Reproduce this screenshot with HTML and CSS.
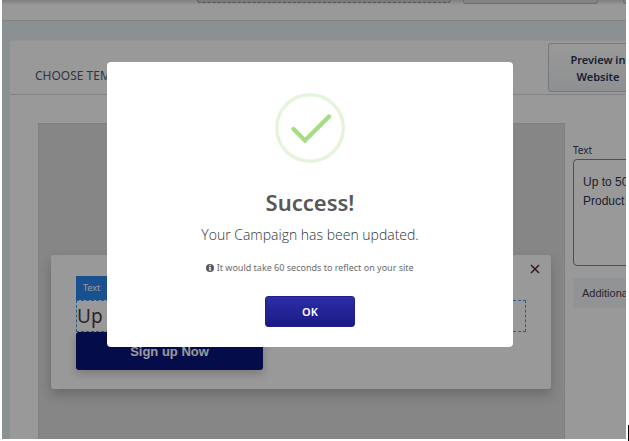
FILE: index.html
```html
<!DOCTYPE html>
<html lang="en">
<head>
    <meta charset="UTF-8">
    <meta name="viewport" content="width=device-width, initial-scale=1.0">
    <title>Choose Template</title>
    <link rel="stylesheet" href="styles.css">
</head>
<body>

    <div class="app">
        <header class="topbar">
            <div class="topbar-search"></div>
            <div class="topbar-select"></div>
            <div class="topbar-more"></div>
        </header>

        <main class="panel">
            <div class="panel-header">
                <h1>CHOOSE TEMPLATE</h1>
                <button type="button" class="preview-btn">Preview in<br>Website</button>
            </div>

            <div class="editor">
                <section class="canvas">
                    <div class="campaign">
                        <button type="button" class="campaign-close" aria-label="Close">
                            <svg width="10" height="10" viewBox="0 0 10 10"><path d="M1 1l8 8M9 1L1 9" fill="none" stroke="currentColor" stroke-width="1.5"/></svg>
                        </button>
                        <span class="block-tag">Text</span>
                        <p class="block-text">Up to 50</p>
                        <button type="button" class="signup-btn">Sign up Now</button>
                    </div>
                </section>

                <aside class="settings">
                    <label for="block-text">Text</label>
                    <textarea id="block-text">Up to 50
Product</textarea>
                    <button type="button" class="additional">Additiona</button>
                </aside>
            </div>
        </main>

        <!-- Success dialog -->
        <div class="overlay">
            <div class="modal" role="dialog" aria-labelledby="modal-title">
                <svg class="modal-icon" viewBox="0 0 70 70">
                    <circle cx="35" cy="35" r="33.3" fill="none" stroke="#e4f5da" stroke-width="3.4"/>
                    <path d="M18.5 36L30 47.5L54 23.5" fill="none" stroke="#a5dc86" stroke-width="4.4" stroke-linecap="round"/>
                </svg>
                <h2 id="modal-title">Success!</h2>
                <p class="modal-text">Your Campaign has been updated.</p>
                <p class="modal-hint">
                    <svg width="8" height="8" viewBox="0 0 8 8"><circle cx="4" cy="4" r="4" fill="#54595f"/><path d="M3.4 1h1.3v1.2H3.4zM2.9 3h1.8v2.7h.6v.9H2.8v-.9h.6V3.9h-.5z" fill="#fff"/></svg>
                    It would take 60 seconds to reflect on your site
                </p>
                <button type="button" class="ok-btn">OK</button>
            </div>
        </div>
    </div>
    <span class="caret"></span>

</body>
</html>
```
FILE: styles.css
```css
* {
    box-sizing: border-box;
}

body {
    font-family: 'Noto Sans', 'Segoe UI', sans-serif;
    margin: 0;
    padding: 0 3px 2px 2px;
    height: 100vh;
    overflow: hidden;
    background-color: #fff;
    color: #3c4257;
}

button {
    font-family: inherit;
    cursor: pointer;
}

.app {
    position: relative;
    display: flex;
    flex-direction: column;
    height: 100%;
    overflow: hidden;
    background-color: #e8f0f5;
}

/* Top bar */
.topbar {
    display: flex;
    flex-shrink: 0;
    align-items: flex-start;
    justify-content: flex-end;
    height: 21px;
    background: linear-gradient(#d4d4d4, #fff 5px);
    border-bottom: 1px solid #d5d9dc;
}

.topbar-search {
    width: 254px;
    height: 3px;
    margin-right: 12px;
    border: 1px dashed #8a8f94;
    border-top: none;
    border-radius: 0 0 3px 3px;
    background-color: #ccc;
}

.topbar-select {
    width: 135px;
    height: 4px;
    margin-right: 25px;
    border: 1px solid #b5bac2;
    border-top: none;
    border-radius: 0 0 3px 3px;
    background-color: #d8dadd;
}

.topbar-more {
    width: 3px;
    height: 4px;
    border-left: 1px solid #b5bac2;
    border-bottom: 1px solid #b5bac2;
    border-radius: 0 0 0 3px;
}

/* Main panel */
.panel {
    display: flex;
    flex: 1;
    flex-direction: column;
    margin: 19px 0 0 8px;
    border-top: 1px solid #f2f5f7;
    border-radius: 3px 0 0 0;
    background-color: #fff;
}

.panel-header {
    display: flex;
    align-items: flex-start;
    justify-content: space-between;
    height: 54px;
    padding: 2px 0 0 25px;
    border-bottom: 1px solid #d8dbdf;
}

.panel-header h1 {
    margin: 24px 0 0;
    font-size: 12px;
    font-weight: 400;
    line-height: 18px;
    color: #515a6e;
}

.preview-btn {
    flex-shrink: 0;
    width: 102px;
    height: 49px;
    margin-right: -24px;
    padding: 0 2px 0 0;
    border: 1px solid #c4cad2;
    border-radius: 3px;
    background: linear-gradient(#fff, #eef0f2);
    font-size: 11px;
    font-weight: 600;
    line-height: 17px;
    color: #2c3555;
}

.editor {
    display: flex;
    flex: 1;
}

.canvas {
    flex: 1;
    margin: 28px 0 0 28px;
    padding: 131px 13px 0 12px;
    border: 1px solid #d6d6d6;
    border-bottom: none;
    background-color: #dfdfdf;
}

.campaign {
    position: relative;
    padding: 21px 25px 19px;
    border-radius: 3px;
    background-color: #fff;
    box-shadow: 0 6px 12px rgba(0, 0, 0, 0.2);
}

.campaign-close {
    position: absolute;
    top: 9px;
    right: 11px;
    display: flex;
    padding: 0;
    border: none;
    background: none;
    color: #582d3b;
}

.block-tag {
    display: block;
    width: 60px;
    padding: 0 7px;
    background-color: #2b88f0;
    font-size: 9px;
    line-height: 24px;
    color: #fff;
}

.block-text {
    margin: 0;
    border: 1px dashed #3f9ae8;
    font-size: 19px;
    line-height: 30px;
    color: #4a3c50;
}

.signup-btn {
    display: block;
    width: 187px;
    height: 38px;
    border: none;
    border-radius: 3px;
    background-color: #08147a;
    box-shadow: 0 4px 10px rgba(0, 0, 0, 0.2);
    font-family: 'Liberation Sans', Arial, sans-serif;
    font-size: 13px;
    font-weight: 700;
    color: #fff;
}

/* Block settings */
.settings {
    width: 61px;
    padding: 46px 0 0 8px;
    overflow: hidden;
}

.settings label {
    display: block;
    font-size: 10px;
    line-height: 18px;
}

.settings textarea {
    display: block;
    width: 160px;
    height: 107px;
    padding: 13px 9px;
    border: 1px solid #7d8799;
    border-radius: 4px;
    background-color: #fff;
    resize: none;
    font-family: 'Liberation Sans', Arial, sans-serif;
    font-size: 12px;
    line-height: 19px;
    color: #303850;
}

.additional {
    display: block;
    width: 160px;
    height: 30px;
    margin-top: 12px;
    padding: 0 9px;
    border: none;
    background-color: #f3f5f8;
    font-family: 'Liberation Sans', Arial, sans-serif;
    font-size: 11px;
    text-align: left;
    color: #4a3c50;
}

/* Success dialog */
.overlay {
    position: absolute;
    inset: 0;
    display: flex;
    align-items: flex-start;
    justify-content: center;
    padding: 62px 8px 0 0;
    background-color: rgba(0, 0, 0, 0.4);
}

.modal {
    display: flex;
    flex-direction: column;
    align-items: center;
    width: 66%;
    padding: 31px 20px 20px;
    border-radius: 4px;
    background-color: #fff;
    text-align: center;
}

.modal-icon {
    width: 70px;
    height: 70px;
}

.modal h2 {
    margin: 24px 0 0;
    font-size: 22px;
    font-weight: 600;
    line-height: 30px;
    color: #595959;
}

.modal-text {
    margin: 8px 0 0;
    font-family: 'Open Sans', 'Segoe UI', sans-serif;
    font-size: 14px;
    font-weight: 300;
    line-height: 20px;
    color: #333;
}

.modal-hint {
    margin: 16px 0 0;
    font-size: 9px;
    line-height: 14px;
    color: #6b6b6b;
}

.modal-hint svg {
    vertical-align: -1px;
}

.ok-btn {
    width: 90px;
    height: 31px;
    margin-top: 21px;
    border: 1px solid #20208a;
    border-radius: 3px;
    background: linear-gradient(#2d2da8, #1a1a84);
    font-size: 11px;
    font-weight: 600;
    color: #fff;
}

.caret {
    position: absolute;
    right: 0;
    bottom: 0;
    width: 1px;
    height: 16px;
    background-color: #000;
}
```
